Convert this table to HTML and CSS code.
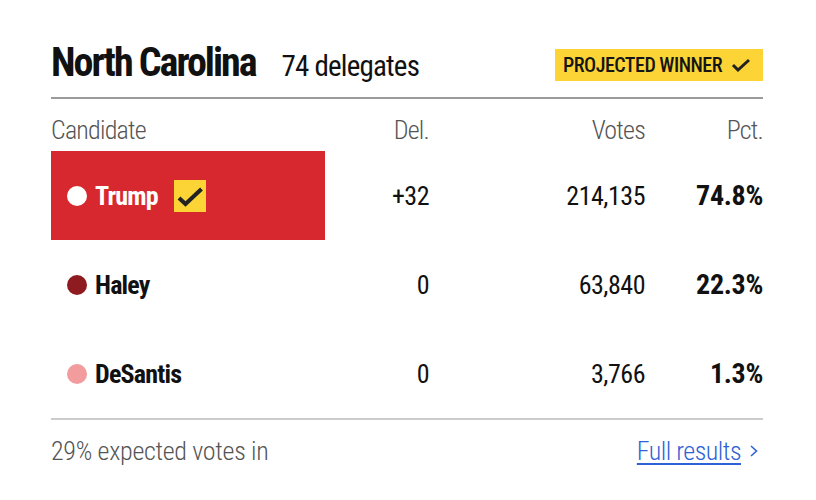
FILE: index.html
```html
<!DOCTYPE html>
<html lang="en">
<head>
<meta charset="utf-8">
<title>North Carolina results</title>
<link rel="stylesheet" href="styles.css">
</head>
<body>
<section class="card">
  <header class="head">
    <h1 class="title">North Carolina <span class="dels">74 delegates</span></h1>
    <span class="badge"><span class="badge-text">PROJECTED WINNER</span>
      <svg class="badge-check" width="20" height="16" viewBox="0 0 20 16"><path d="M2 8 L7 13 L18 3" fill="none" stroke="#222" stroke-width="3"/></svg>
    </span>
  </header>
  <div class="grid">
    <div class="th cand">Candidate</div>
    <div class="th num">Del.</div>
    <div class="th num">Votes</div>
    <div class="th num">Pct.</div>

    <div class="cell cand win"><span class="dot dot-white"></span><span class="name">Trump</span>
      <span class="winbox"><svg width="32" height="32" viewBox="0 0 32 32"><path d="M5 18 L11.5 24 L27.5 9" fill="none" stroke="#222" stroke-width="4"/></svg></span>
    </div>
    <div class="cell num">+32</div>
    <div class="cell num">214,135</div>
    <div class="cell num pct">74.8%</div>

    <div class="cell cand"><span class="dot dot-haley"></span><span class="name">Haley</span></div>
    <div class="cell num">0</div>
    <div class="cell num">63,840</div>
    <div class="cell num pct">22.3%</div>

    <div class="cell cand"><span class="dot dot-desantis"></span><span class="name">DeSantis</span></div>
    <div class="cell num">0</div>
    <div class="cell num">3,766</div>
    <div class="cell num pct">1.3%</div>
  </div>
  <footer class="foot">
    <span class="expected">29% expected votes in</span>
    <a class="full" href="#">Full results</a>
    <svg class="chev" width="10" height="14" viewBox="0 0 10 14"><path d="M2 2 L7.5 7 L2 12" fill="none" stroke="#2f62d6" stroke-width="1.6"/></svg>
  </footer>
</section>
</body>
</html>
```
FILE: styles.css
```css
* { box-sizing: border-box; }
body {
  margin: 0;
  background: #fff;
  font-family: "Roboto Condensed", "Liberation Sans Narrow", "DejaVu Sans Condensed", "Liberation Sans", sans-serif;
  color: #111;
}
.card {
  width: 712px;
  margin-left: 51px;
}
.head {
  display: flex;
  justify-content: space-between;
  align-items: center;
  padding-top: 32px;
  height: 99px;
  border-bottom: 2px solid #9b9b9b;
}
.title {
  margin: 0;
  font-size: 40px;
  line-height: 40px;
  font-weight: 700;
  letter-spacing: -2px;
  display: flex;
  align-items: baseline;
  gap: 26px;
  white-space: nowrap;
}
.dels {
  font-size: 29px;
  font-weight: 400;
  letter-spacing: -0.8px;
}
.badge {
  background: #fcd435;
  height: 32px;
  width: 208px;
  display: flex;
  align-items: center;
  padding-left: 8px;
  gap: 9px;
  font-size: 20px;
  font-weight: 500;
  letter-spacing: -0.5px;
  color: #151515;
  white-space: nowrap;
}
.grid {
  display: grid;
  grid-template-columns: 274px 104px 216px 118px;
  grid-template-rows: 52px 89px 89px 89px;
}
.th {
  display: flex;
  align-items: center;
  font-size: 26px;
  font-weight: 300;
  letter-spacing: -0.8px;
  color: #555;
  padding-top: 9px;
}
.num { justify-content: flex-end; }
.cell {
  display: flex;
  align-items: center;
  font-size: 26px;
  letter-spacing: -0.5px;
  color: #111;
}
.cell.cand { padding-left: 16px; font-weight: 700; letter-spacing: -0.8px; }
.cell.win { background: #d8282f; color: #fff; }
.pct { font-weight: 700; font-size: 28px; letter-spacing: -0.3px; }
.dot {
  width: 20px;
  height: 20px;
  border-radius: 50%;
  margin-right: 8px;
  flex: none;
}
.dot-white { background: #fff; }
.dot-haley { background: #8d1b20; }
.dot-desantis { background: #f29c9e; }
.winbox {
  width: 32px;
  height: 32px;
  background: #fcd435;
  margin-left: 16px;
  display: flex;
}
.foot {
  border-top: 2px solid #cccccc;
  height: 64px;
  display: flex;
  align-items: center;
  font-size: 26px;
  letter-spacing: -0.3px;
  color: #555;
}
.expected { flex: 1; font-weight: 300; }
.full {
  color: #2f62d6;
  text-decoration: underline;
  text-decoration-thickness: 2px;
  text-underline-offset: 3px;
  font-weight: 300;
  letter-spacing: -0.5px;
}
.chev { margin-left: 8px; margin-right: 4px; }
```
